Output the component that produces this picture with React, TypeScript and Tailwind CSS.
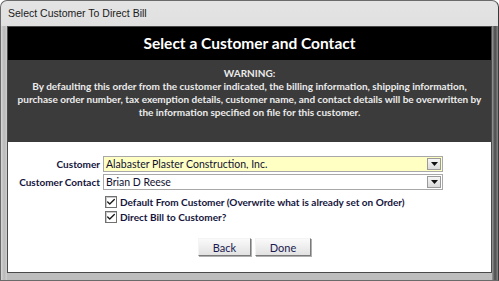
import { Check } from "lucide-react";

const calibri = { fontFamily: "Lato, 'Open Sans', sans-serif" };

function Combo({ value, yellow }: { value: string; yellow?: boolean }) {
  return (
    <div
      className={`flex h-[16px] w-[340px] items-center border border-[#a8a8a8] ${
        yellow ? "bg-[#ffffc4]" : "bg-white"
      }`}
    >
      <span className="flex-1 truncate pl-[2px] text-[10.5px] leading-none text-[#101030]">{value}</span>
      <div className="mr-[1px] flex h-[12px] w-[14px] items-center justify-center border border-[#9a9a9a] bg-gradient-to-b from-[#f6f6f6] to-[#dadada]">
        <svg width="7" height="4" viewBox="0 0 7 4">
          <path d="M0 0h7L3.5 4z" fill="#111" />
        </svg>
      </div>
    </div>
  );
}

function CheckRow({ label }: { label: string }) {
  return (
    <div className="flex items-center gap-[3px]">
      <div className="flex h-[12px] w-[12px] items-center justify-center border border-[#707070] bg-white shadow-[inset_1px_1px_0_#c8c8c8]">
        <Check size={10} strokeWidth={3.2} className="text-[#1a1a1a]" />
      </div>
      <span className="text-[10px] font-bold leading-none text-[#14143c]">{label}</span>
    </div>
  );
}

function Btn({ children, w }: { children: string; w: string }) {
  return (
    <button
      className={`${w} h-[18px] border border-t-[#f4f4f4] border-l-[#f4f4f4] border-r-[#7a7a7a] border-b-[#7a7a7a] bg-gradient-to-b from-[#fafafa] to-[#e2e2e2] text-[11px] leading-none text-[#1a1a50] shadow-[1px_1px_0_#b0b0b0]`}
    >
      {children}
    </button>
  );
}

export default function App() {
  return (
    <div className="h-[281px] w-[499px] overflow-hidden bg-white">
      <div className="flex h-full w-full flex-col rounded-t-[7px] border border-[#6a6a6a] border-r-[#3a3a3a] bg-gradient-to-b from-[#e4e4e4] via-[#cfcfcf] to-[#bdbdbd]">
        <div className="flex h-[25px] items-center pl-[7px]">
          <span className="text-[10.5px] text-[#1a1a1a]" style={{ fontFamily: "'Liberation Sans', Arial, sans-serif" }}>
            Select Customer To Direct Bill
          </span>
        </div>
        <div className="flex flex-1">
          <div className="w-[6px] bg-gradient-to-r from-[#d8d8d8] via-[#b8b8b8] to-[#cfcfcf]" />
          <div
            className="mb-[7px] flex flex-1 flex-col border border-[#4a4a4a] bg-white"
            style={calibri}
          >
            <div className="flex h-[33px] items-center justify-center bg-black">
              <span className="text-[15.5px] font-bold text-white">Select a Customer and Contact</span>
            </div>
            <div className="flex h-[82px] flex-col items-center bg-[#3b3b3b] pt-[7px] text-center text-[10px] font-bold leading-[13px] text-[#ececec]">
              <p>WARNING:</p>
              <p>
                By defaulting this order from the customer indicated, the billing information, shipping information,
              </p>
              <p>purchase order number, tax exemption details, customer name, and contact details will be overwritten by</p>
              <p>the information specified on file for this customer.</p>
            </div>
            <div className="flex flex-1 flex-col pt-[14px]">
              <div className="grid grid-cols-[92px_340px] items-center gap-x-[3px] gap-y-[2px]">
                <span className="text-right text-[10px] font-bold leading-none text-[#14143c]">Customer</span>
                <Combo value="Alabaster Plaster Construction, Inc." yellow />
                <span className="text-right text-[10px] font-bold leading-none text-[#14143c]">Customer Contact</span>
                <Combo value="Brian D Reese" />
              </div>
              <div className="mt-[6px] flex flex-col gap-[3px] pl-[97px]">
                <CheckRow label="Default From Customer (Overwrite what is already set on Order)" />
                <CheckRow label="Direct Bill to Customer?" />
              </div>
              <div className="mt-[15px] flex gap-[4px] pl-[190px]">
                <Btn w="w-[53px]">Back</Btn>
                <Btn w="w-[56px]">Done</Btn>
              </div>
            </div>
          </div>
          <div className="w-[6px] bg-gradient-to-r from-[#9a9a9a] via-[#4a4a4a] to-[#8a8a8a]" />
        </div>
      </div>
    </div>
  );
}
